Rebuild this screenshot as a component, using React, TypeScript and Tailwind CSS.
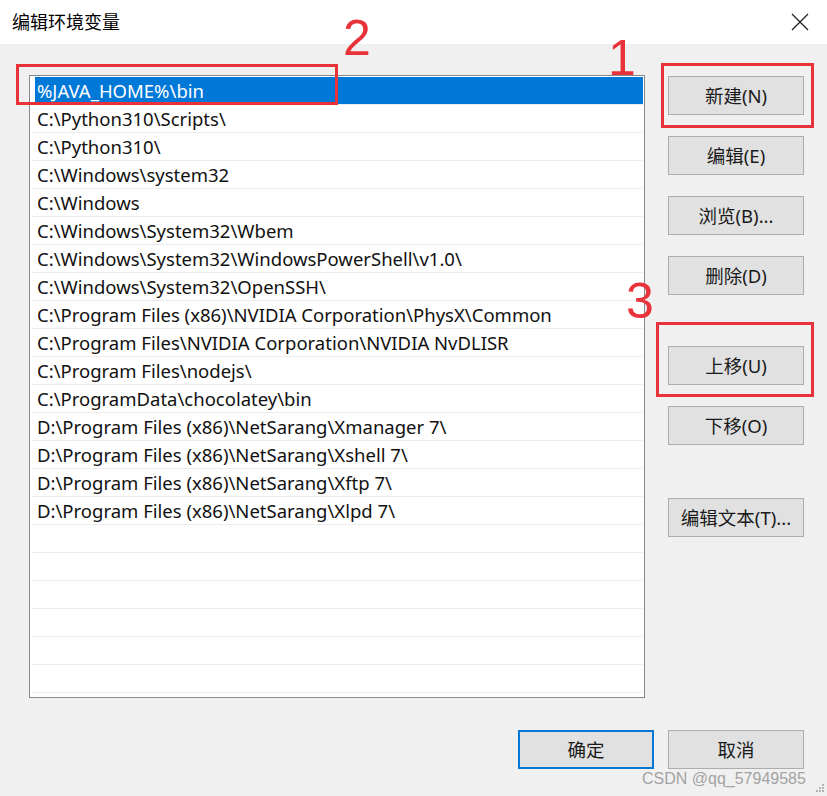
import React from "react";

const paths = [
  "%JAVA_HOME%\\bin",
  "C:\\Python310\\Scripts\\",
  "C:\\Python310\\",
  "C:\\Windows\\system32",
  "C:\\Windows",
  "C:\\Windows\\System32\\Wbem",
  "C:\\Windows\\System32\\WindowsPowerShell\\v1.0\\",
  "C:\\Windows\\System32\\OpenSSH\\",
  "C:\\Program Files (x86)\\NVIDIA Corporation\\PhysX\\Common",
  "C:\\Program Files\\NVIDIA Corporation\\NVIDIA NvDLISR",
  "C:\\Program Files\\nodejs\\",
  "C:\\ProgramData\\chocolatey\\bin",
  "D:\\Program Files (x86)\\NetSarang\\Xmanager 7\\",
  "D:\\Program Files (x86)\\NetSarang\\Xshell 7\\",
  "D:\\Program Files (x86)\\NetSarang\\Xftp 7\\",
  "D:\\Program Files (x86)\\NetSarang\\Xlpd 7\\",
];

const font = "font-['Noto_Sans','Noto_Sans_CJK_SC',sans-serif]";

const Btn = ({ label, primary }: { label: string; primary?: boolean }) => (
  <button
    className={`w-[136px] h-[39px] bg-[#e1e1e1] text-[18.5px] text-[#1a1a1a] flex items-center justify-center ${font} ${
      primary ? "border-2 border-[#0078d7]" : "border border-[#adadad]"
    }`}
  >
    {label}
  </button>
);

export default function App() {
  const rows = Array.from({ length: 23 }, (_, i) => paths[i] ?? "");
  return (
    <div className={`relative w-[827px] h-[796px] bg-[#f0f0f0] overflow-hidden ${font}`}>
      {/* title bar */}
      <div className="h-[44px] bg-white flex items-center justify-between pl-[12px] pr-[18px]">
        <span className="text-[18px] text-black">编辑环境变量</span>
        <svg width="18" height="18" viewBox="0 0 18 18" className="text-[#222]">
          <path d="M1 1L17 17M17 1L1 17" stroke="currentColor" strokeWidth="1.3" />
        </svg>
      </div>

      <div className="flex pl-[29px] pt-[31px]">
        {/* list */}
        <div className="w-[616px] h-[623px] bg-white border border-[#828790] overflow-hidden px-px pt-px">
          {rows.map((p, i) => (
            <div
              key={i}
              className="h-[28px] border-b border-[#ececec] flex items-center pl-[4px]"
            >
              {i === 0 ? (
                <span className="bg-[#0078d7] text-white h-[27px] flex-1 flex items-center pl-[2px] text-[18.5px] whitespace-nowrap">
                  {p}
                </span>
              ) : (
                <span className="text-[18.5px] text-[#111] pl-[2px] whitespace-nowrap">{p}</span>
              )}
            </div>
          ))}
        </div>

        {/* buttons */}
        <div className="flex flex-col ml-[23px] pt-[1px]">
          <div className="flex flex-col gap-[21px]">
            <Btn label="新建(N)" />
            <Btn label="编辑(E)" />
            <Btn label="浏览(B)..." />
            <Btn label="删除(D)" />
          </div>
          <div className="flex flex-col gap-[21px] mt-[51px]">
            <Btn label="上移(U)" />
            <Btn label="下移(O)" />
          </div>
          <div className="mt-[53px]">
            <Btn label="编辑文本(T)..." />
          </div>
        </div>
      </div>

      {/* footer */}
      <div className="flex justify-end gap-[14px] pr-[23px] mt-[32px]">
        <Btn label="确定" primary />
        <Btn label="取消" />
      </div>

      {/* annotations */}
      <div className="absolute left-[16px] top-[64px] w-[322px] h-[41px] border-[3px] border-[#e8333a]" />
      <div className="absolute left-[661px] top-[63px] w-[153px] h-[65px] border-[3px] border-[#e8333a]" />
      <div className="absolute left-[656px] top-[322px] w-[158px] h-[75px] border-[3px] border-[#e8333a]" />
      <span className="absolute left-[343px] top-[13px] text-[50px] leading-none text-[#e8333a] font-['Liberation_Sans',sans-serif]">2</span>
      <span className="absolute left-[608px] top-[33px] text-[50px] leading-none text-[#e8333a] font-['Liberation_Sans',sans-serif]">1</span>
      <span className="absolute left-[626px] top-[276px] text-[50px] leading-none text-[#e8333a] font-['Liberation_Sans',sans-serif]">3</span>

      {/* watermark */}
      <span className="absolute left-[642px] top-[767px] text-[16px] text-[#a3a3a3] font-['Liberation_Sans',sans-serif]">
        CSDN @qq_57949585
      </span>
      <svg className="absolute right-[2px] bottom-[3px]" width="10" height="10" viewBox="0 0 10 10">
        <g fill="#b5b5b5">
          <rect x="7" y="1" width="2" height="2" />
          <rect x="4" y="4" width="2" height="2" />
          <rect x="7" y="4" width="2" height="2" />
          <rect x="1" y="7" width="2" height="2" />
          <rect x="4" y="7" width="2" height="2" />
          <rect x="7" y="7" width="2" height="2" />
        </g>
      </svg>
    </div>
  );
}
